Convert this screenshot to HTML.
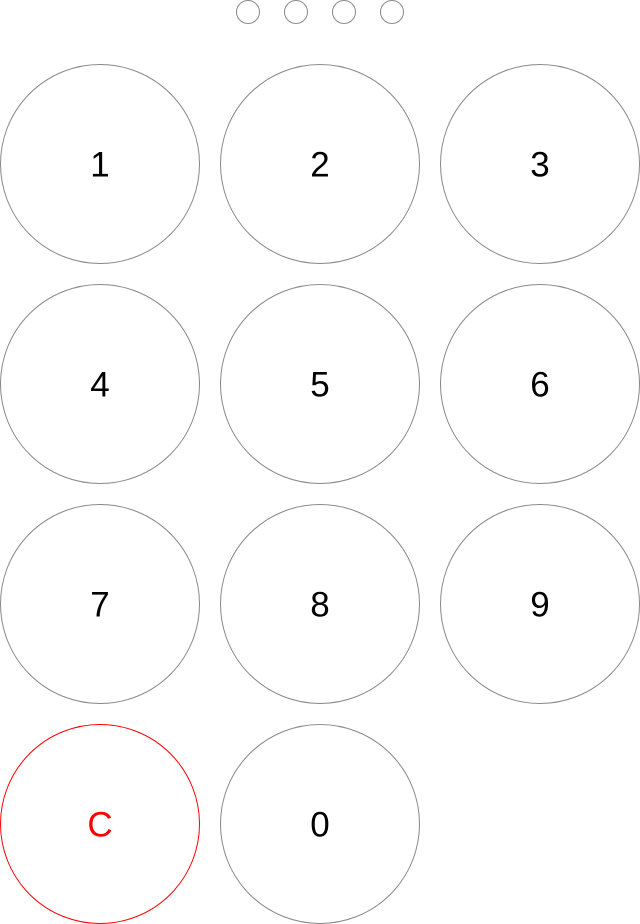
<!DOCTYPE html>
<html><head><meta charset="utf-8"><style>
html,body{margin:0;padding:0;background:#fff;width:640px;height:924px;overflow:hidden}
svg{display:block}
text{font-family:"Liberation Sans",sans-serif;font-size:35px;text-anchor:middle;dominant-baseline:central}
</style></head><body>
<svg width="640" height="924" viewBox="0 0 640 924" xmlns="http://www.w3.org/2000/svg">
<g fill="none" stroke="#888" stroke-width="1">
<circle cx="248" cy="12" r="11.5"/><circle cx="296" cy="12" r="11.5"/><circle cx="344" cy="12" r="11.5"/><circle cx="392" cy="12" r="11.5"/>
<circle cx="100" cy="164" r="99.5"/><circle cx="320" cy="164" r="99.5"/><circle cx="540" cy="164" r="99.5"/>
<circle cx="100" cy="384" r="99.5"/><circle cx="320" cy="384" r="99.5"/><circle cx="540" cy="384" r="99.5"/>
<circle cx="100" cy="604" r="99.5"/><circle cx="320" cy="604" r="99.5"/><circle cx="540" cy="604" r="99.5"/>
<circle cx="320" cy="824" r="99.5"/>
<circle cx="100" cy="824" r="99.5" stroke="#f00"/>
</g>
<g fill="#000">
<text x="100" y="165">1</text><text x="320" y="165">2</text><text x="540" y="165">3</text>
<text x="100" y="385">4</text><text x="320" y="385">5</text><text x="540" y="385">6</text>
<text x="100" y="605">7</text><text x="320" y="605">8</text><text x="540" y="605">9</text>
<text x="320" y="825">0</text>
<text x="100" y="825" fill="#f00">C</text>
</g>
</svg>
</body></html>
